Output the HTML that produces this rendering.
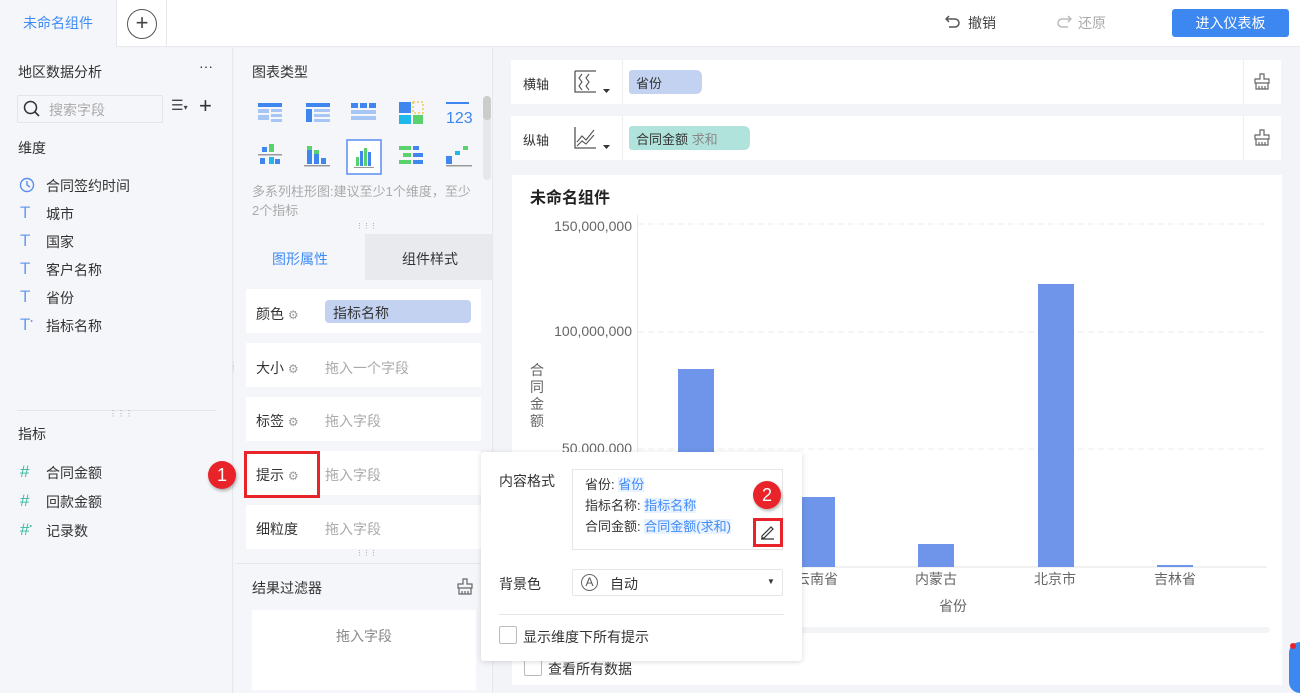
<!DOCTYPE html><html style="overflow:hidden;height:693px"><head><meta charset="utf-8"><style>
*{box-sizing:border-box;margin:0;padding:0}
body{width:1300px;height:693px;overflow:hidden;position:relative;background:#f2f4f7;font-family:"Liberation Sans","Noto Sans CJK SC",sans-serif;font-size:14px;color:#333}
.a{position:absolute}
.t{white-space:nowrap}
</style></head><body>
<!-- top bar -->
<div class="a" style="left:0;top:0;width:1300px;height:47px;background:#fff;border-bottom:1px solid #e8eaee"></div>
<div class="a" style="left:0;top:0;width:117px;height:47px;background:#f5f6f9;border-right:1px solid #e5e7eb"></div>
<div class="a t" style="left:23px;top:13px;color:#3f8cf5;font-size:14px">未命名组件</div>
<div class="a" style="left:166px;top:0;width:1px;height:47px;background:#e5e7eb"></div>
<div class="a" style="left:127px;top:9px;width:30px;height:30px;border:1.5px solid #555;border-radius:50%;text-align:center;line-height:26px;font-size:22px;color:#444">+</div>
<svg class="a" style="left:945px;top:14px" width="16" height="16"><path d="M4 2 L1 5 L4 8 M1 5 H10 A4 4 0 0 1 10 13 H4" fill="none" stroke="#555" stroke-width="1.5"/></svg>
<div class="a t" style="left:968px;top:13px;color:#444">撤销</div>
<svg class="a" style="left:1056px;top:14px" width="16" height="16"><path d="M12 2 L15 5 L12 8 M15 5 H6 A4 4 0 0 0 6 13 H12" fill="none" stroke="#bbb" stroke-width="1.5"/></svg>
<div class="a t" style="left:1078px;top:13px;color:#aaa">还原</div>
<div class="a t" style="left:1172px;top:9px;width:117px;height:28px;background:#3c87f0;border-radius:3px;color:#fff;text-align:center;line-height:28px">进入仪表板</div>

<!-- left panel -->
<div class="a" style="left:0;top:48px;width:233px;height:645px;background:#f5f6f9;border-right:1px solid #e5e7eb"></div>
<div class="a t" style="left:18px;top:62px;font-size:14px;color:#333">地区数据分析</div>
<div class="a t" style="left:199px;top:58px;font-size:14px;color:#333">···</div>
<div class="a" style="left:17px;top:95px;width:146px;height:28px;border:1px solid #e3e5ea;background:#f5f6f9;border-radius:2px"></div>
<svg class="a" style="left:23px;top:100px" width="18" height="18"><circle cx="7.5" cy="7.5" r="6" fill="none" stroke="#333" stroke-width="1.5"/><path d="M12 12 L16 16" stroke="#333" stroke-width="1.6"/></svg>
<div class="a t" style="left:49px;top:100px;color:#aaa">搜索字段</div>
<div class="a t" style="left:171px;top:97px;color:#444;font-size:14px">☰<span style="font-size:8px">▾</span></div>
<div class="a t" style="left:199px;top:93px;color:#333;font-size:22px;font-weight:300">+</div>
<div class="a t" style="left:18px;top:138px">维度</div>
<svg class="a" style="left:19px;top:177px" width="16" height="16"><circle cx="8" cy="8" r="6.5" fill="none" stroke="#5a8ef0" stroke-width="1.4"/><path d="M8 4 V8 L11 10" fill="none" stroke="#5a8ef0" stroke-width="1.4"/></svg>
<div class="a t" style="left:46px;top:176px">合同签约时间</div>
<div class="a t" style="left:20px;top:203px;color:#6b9cf0;font-size:17px">T</div><div class="a t" style="left:46px;top:204px">城市</div>
<div class="a t" style="left:20px;top:231px;color:#6b9cf0;font-size:17px">T</div><div class="a t" style="left:46px;top:232px">国家</div>
<div class="a t" style="left:20px;top:259px;color:#6b9cf0;font-size:17px">T</div><div class="a t" style="left:46px;top:260px">客户名称</div>
<div class="a t" style="left:20px;top:287px;color:#6b9cf0;font-size:17px">T</div><div class="a t" style="left:46px;top:288px">省份</div>
<div class="a t" style="left:20px;top:315px;color:#6b9cf0;font-size:17px">T<sup style="font-size:7px">•</sup></div><div class="a t" style="left:46px;top:316px">指标名称</div>
<div class="a" style="left:17px;top:410px;width:199px;height:1px;background:#e3e5ea"></div>
<div class="a t" style="left:109px;top:409px;font-size:8px;color:#999">⋮⋮⋮</div>
<div class="a t" style="left:18px;top:424px">指标</div>
<div class="a t" style="left:20px;top:462px;color:#3bb8a0;font-size:17px">#</div><div class="a t" style="left:46px;top:463px">合同金额</div>
<div class="a t" style="left:20px;top:491px;color:#3bb8a0;font-size:17px">#</div><div class="a t" style="left:46px;top:492px">回款金额</div>
<div class="a t" style="left:20px;top:520px;color:#3bb8a0;font-size:17px">#<sup style="font-size:7px">•</sup></div><div class="a t" style="left:46px;top:521px">记录数</div>
<div class="a t" style="left:230px;top:364px;font-size:8px;color:#999;line-height:4px">⋮<br>⋮</div>

<!-- middle panel -->
<div class="a" style="left:234px;top:48px;width:259px;height:645px;background:#f5f6f9;border-right:1px solid #e5e7eb"></div>
<div class="a t" style="left:252px;top:62px">图表类型</div>
<div class="a" style="left:483px;top:96px;width:8px;height:84px;background:#e5e7eb;border-radius:4px"></div>
<div class="a" style="left:483px;top:96px;width:8px;height:24px;background:#ccc;border-radius:4px"></div>
<svg class="a" style="left:256px;top:100px" width="230" height="80">
<g fill="#3f86ee"><rect x="2" y="3" width="24" height="4"/></g><g fill="#a7c6f5"><rect x="2" y="9" width="11" height="4"/><rect x="15" y="9" width="11" height="3"/><rect x="2" y="15" width="11" height="5"/><rect x="15" y="14" width="11" height="3"/><rect x="15" y="19" width="11" height="3"/></g>
<g transform="translate(48,0)"><rect x="2" y="3" width="24" height="4" fill="#3f86ee"/><rect x="2" y="9" width="6" height="13" fill="#3f86ee"/><g fill="#a7c6f5"><rect x="10" y="9" width="16" height="3"/><rect x="10" y="14" width="16" height="3"/><rect x="10" y="19" width="16" height="3"/></g></g>
<g transform="translate(95,0)" fill="#3f86ee"><rect x="0" y="3" width="7" height="5"/><rect x="9" y="3" width="7" height="5"/><rect x="18" y="3" width="7" height="5"/><g fill="#a7c6f5"><rect x="0" y="10" width="25" height="4"/><rect x="0" y="16" width="25" height="4"/></g></g>
<g transform="translate(143,0)"><rect x="0" y="2" width="12" height="11" fill="#3f86ee"/><rect x="14" y="2" width="10" height="11" fill="none" stroke="#f5b400" stroke-dasharray="2 2"/><rect x="0" y="15" width="12" height="9" fill="#1fb8ea"/><rect x="14" y="15" width="10" height="9" fill="#59d16d"/></g>
<g transform="translate(190,0)"><rect x="0" y="2" width="23" height="2" fill="#3f86ee"/><text x="0" y="23" font-size="16" fill="#3f86ee" font-family="Liberation Sans">123</text></g>
<g transform="translate(0,44)"><rect x="6" y="3" width="5" height="5" fill="#3f86ee"/><rect x="13" y="0" width="5" height="8" fill="#59d16d"/><rect x="2" y="10" width="24" height="1.5" fill="#999"/><rect x="4" y="14" width="5" height="6" fill="#3f86ee"/><rect x="13" y="13" width="5" height="7" fill="#1fb8ea"/><rect x="19" y="15" width="5" height="5" fill="#3f86ee"/></g>
<g transform="translate(48,44)"><rect x="3" y="6" width="5" height="14" fill="#3f86ee"/><rect x="3" y="2" width="5" height="4" fill="#59d16d"/><rect x="10" y="10" width="5" height="10" fill="#3f86ee"/><rect x="10" y="6" width="5" height="4" fill="#59d16d"/><rect x="17" y="14" width="5" height="6" fill="#3f86ee"/><rect x="0" y="21" width="26" height="1.5" fill="#999"/></g>
<g transform="translate(91,40)"><rect x="0" y="0" width="34" height="34" fill="#fff" stroke="#5a8ef0" stroke-width="1.5"/><rect x="9" y="17" width="3" height="9" fill="#59d16d"/><rect x="13" y="11" width="3" height="15" fill="#3f86ee"/><rect x="17" y="8" width="3" height="18" fill="#59d16d"/><rect x="21" y="12" width="3" height="14" fill="#3f86ee"/><rect x="7" y="27" width="20" height="1" fill="#999"/></g>
<g transform="translate(143,44)"><rect x="0" y="2" width="12" height="4" fill="#59d16d"/><rect x="14" y="2" width="6" height="4" fill="#3f86ee"/><rect x="4" y="9" width="8" height="4" fill="#59d16d"/><rect x="14" y="9" width="10" height="4" fill="#3f86ee"/><rect x="0" y="16" width="12" height="4" fill="#59d16d"/><rect x="14" y="16" width="10" height="4" fill="#3f86ee"/></g>
<g transform="translate(190,44)"><rect x="0" y="12" width="6" height="8" fill="#3f86ee"/><rect x="9" y="7" width="5" height="4" fill="#1fb8ea"/><rect x="17" y="2" width="5" height="4" fill="#59d16d"/><rect x="0" y="21" width="26" height="1.5" fill="#999"/></g>
</svg>
<div class="a" style="left:252px;top:182px;width:225px;font-size:13px;color:#aaa;line-height:19px">多系列柱形图:建议至少1个维度，至少2个指标</div>
<div class="a t" style="left:356px;top:222px;font-size:7px;color:#999">⋮⋮⋮</div>
<div class="a" style="left:235px;top:234px;width:130px;height:46px;background:#f5f6f9"></div>
<div class="a" style="left:365px;top:234px;width:127px;height:46px;background:#e8eaee"></div>
<div class="a t" style="left:272px;top:249px;color:#3f8cf5">图形属性</div>
<div class="a t" style="left:402px;top:249px;color:#333">组件样式</div>
<div class="a" style="left:246px;top:289px;width:235px;height:44px;background:#fff"></div>
<div class="a" style="left:246px;top:343px;width:235px;height:44px;background:#fff"></div>
<div class="a" style="left:246px;top:397px;width:235px;height:44px;background:#fff"></div>
<div class="a" style="left:246px;top:451px;width:235px;height:44px;background:#fff"></div>
<div class="a" style="left:246px;top:505px;width:235px;height:44px;background:#fff"></div>
<div class="a t" style="left:256px;top:304px">颜色 <span style="color:#999;font-size:12px">⚙</span></div>
<div class="a t" style="left:325px;top:300px;width:146px;height:23px;background:#c2d2f0;border-radius:4px;padding:3px 8px">指标名称</div>
<div class="a t" style="left:256px;top:358px">大小 <span style="color:#999;font-size:12px">⚙</span></div><div class="a t" style="left:325px;top:358px;color:#aaa">拖入一个字段</div>
<div class="a t" style="left:256px;top:411px">标签 <span style="color:#999;font-size:12px">⚙</span></div><div class="a t" style="left:325px;top:411px;color:#aaa">拖入字段</div>
<div class="a t" style="left:256px;top:465px">提示 <span style="color:#999;font-size:12px">⚙</span></div><div class="a t" style="left:325px;top:465px;color:#aaa">拖入字段</div>
<div class="a" style="left:244px;top:451px;width:76px;height:47px;border:3px solid #e8232a"></div>
<div class="a" style="left:208px;top:461px;width:28px;height:28px;border-radius:50%;background:#e8232a;color:#fff;text-align:center;line-height:28px;font-size:18px;box-shadow:1px 2px 3px rgba(0,0,0,.3)">1</div>
<div class="a t" style="left:256px;top:519px">细粒度</div><div class="a t" style="left:325px;top:519px;color:#aaa">拖入字段</div>
<div class="a t" style="left:356px;top:549px;font-size:7px;color:#999">⋮⋮⋮</div>
<div class="a" style="left:235px;top:563px;width:257px;height:1px;background:#e5e7eb"></div>
<div class="a t" style="left:252px;top:578px">结果过滤器</div>
<svg class="a" style="left:457px;top:578px" width="16" height="17"><path d="M6 1h4v5h5v4H1V6h5z M2 10v6h12v-6 M5 13v3 M8 13v3 M11 13v3" fill="none" stroke="#666" stroke-width="1.2"/></svg>
<div class="a" style="left:252px;top:610px;width:224px;height:80px;background:#fff"></div>
<div class="a t" style="left:336px;top:626px;color:#888">拖入字段</div>

<!-- right: axes -->
<div class="a" style="left:511px;top:60px;width:770px;height:44px;background:#fff"></div>
<div class="a" style="left:511px;top:116px;width:770px;height:44px;background:#fff"></div>
<div class="a" style="left:622px;top:60px;width:1px;height:44px;background:#eee"></div>
<div class="a" style="left:622px;top:116px;width:1px;height:44px;background:#eee"></div>
<div class="a" style="left:1243px;top:60px;width:1px;height:44px;background:#eee"></div>
<div class="a" style="left:1243px;top:116px;width:1px;height:44px;background:#eee"></div>
<div class="a t" style="left:523px;top:74px;font-size:13px">横轴</div>
<div class="a t" style="left:523px;top:130px;font-size:13px">纵轴</div>
<svg class="a" style="left:574px;top:70px" width="40" height="26"><path d="M1 1V22H22 M1 1H22" fill="none" stroke="#555" stroke-width="1.3"/><path d="M8 4l-3 4 3 4-3 4 3 4 M15 4l-3 4 3 4-3 4 3 4" fill="none" stroke="#555" stroke-width="1.1"/><path d="M29 19h7l-3.5 4z" fill="#333"/></svg>
<svg class="a" style="left:574px;top:126px" width="40" height="26"><path d="M1 1V22H22" fill="none" stroke="#555" stroke-width="1.3"/><path d="M3 16l5-6 4 4 8-10 M3 20l5-5 4 3 8-9" fill="none" stroke="#555" stroke-width="1.1"/><path d="M29 19h7l-3.5 4z" fill="#333"/></svg>
<div class="a t" style="left:629px;top:70px;width:73px;height:24px;background:#c2d2f0;border-radius:3px 6px 6px 3px;padding:3px 7px;font-size:13px">省份</div>
<div class="a t" style="left:629px;top:126px;width:121px;height:24px;background:#b0e3dc;border-radius:3px 6px 6px 3px;padding:3px 7px;font-size:13px">合同金额 <span style="color:#888">求和</span></div>
<svg class="a" style="left:1254px;top:73px" width="16" height="17"><path d="M6 1h4v5h5v4H1V6h5z M2 10v6h12v-6 M5 13v3 M8 13v3 M11 13v3" fill="none" stroke="#666" stroke-width="1.2"/></svg>
<svg class="a" style="left:1254px;top:129px" width="16" height="17"><path d="M6 1h4v5h5v4H1V6h5z M2 10v6h12v-6 M5 13v3 M8 13v3 M11 13v3" fill="none" stroke="#666" stroke-width="1.2"/></svg>

<!-- chart card -->
<div class="a" style="left:512px;top:175px;width:770px;height:510px;background:#fff"></div>
<div class="a t" style="left:530px;top:184px;font-size:16px;font-weight:bold;color:#222">未命名组件</div>
<svg class="a" style="left:512px;top:175px" width="770" height="510">
<g stroke="#eee" stroke-dasharray="6 4"><line x1="126" y1="49" x2="755" y2="49"/><line x1="126" y1="157" x2="755" y2="157"/><line x1="126" y1="274" x2="755" y2="274"/></g>
<line x1="125.5" y1="40" x2="125.5" y2="392" stroke="#e8e8e8"/>
<line x1="126" y1="392" x2="755" y2="392" stroke="#e3e3e3"/>
<g fill="#6e95ea"><rect x="166" y="194" width="36" height="198"/><rect x="288" y="322" width="35" height="70"/><rect x="406" y="369" width="36" height="23"/><rect x="526" y="109" width="36" height="283"/><rect x="645" y="390" width="36" height="2"/></g>
<g font-family="Liberation Sans,Noto Sans CJK SC,sans-serif" font-size="14" fill="#666" text-anchor="end"><text x="120" y="56">150,000,000</text><text x="120" y="161">100,000,000</text><text x="120" y="278">50,000,000</text></g>
<g font-family="Liberation Sans,Noto Sans CJK SC,sans-serif" font-size="14" fill="#666" text-anchor="middle"><text x="305" y="409">云南省</text><text x="424" y="409">内蒙古</text><text x="543" y="409">北京市</text><text x="663" y="409">吉林省</text><text x="441" y="436">省份</text></g>
<g font-family="Liberation Sans,Noto Sans CJK SC,sans-serif" font-size="14" fill="#666"><text x="18" y="200">合</text><text x="18" y="217">同</text><text x="18" y="234">金</text><text x="18" y="251">额</text></g>
<rect x="8" y="452" width="750" height="6" rx="3" fill="#f3f4f6"/>
</svg>
<div class="a" style="left:524px;top:658px;width:18px;height:18px;border:1px solid #bbb;border-radius:2px;background:#fff"></div>
<div class="a t" style="left:548px;top:659px">查看所有数据</div>
<div class="a" style="left:1289px;top:642px;width:11px;height:51px;border-radius:30px 0 0 30px;background:#3c87f0"></div>
<div class="a" style="left:1290px;top:643px;width:6px;height:6px;border-radius:50%;background:#e8232a"></div>

<!-- popup -->
<div class="a" style="left:481px;top:452px;width:321px;height:209px;background:#fff;border-radius:3px;box-shadow:0 1px 6px rgba(0,0,0,.15)"></div>
<div class="a t" style="left:499px;top:471px;font-size:14px">内容格式</div>
<div class="a" style="left:572px;top:469px;width:211px;height:81px;border:1px solid #e6e6e6"></div>
<div class="a t" style="left:585px;top:474px;font-size:13px;line-height:21px">省份: <span style="background:#eaf2fe;color:#3f8cf5">省份</span><br>指标名称: <span style="background:#eaf2fe;color:#3f8cf5">指标名称</span><br>合同金额: <span style="background:#eaf2fe;color:#3f8cf5">合同金额(求和)</span></div>
<div class="a" style="left:753px;top:518px;width:30px;height:29px;border:3px solid #e8232a;background:#fff"></div>
<svg class="a" style="left:759px;top:523px" width="18" height="18"><path d="M3 13l9-9 2 2-9 9H3z M2 16h13" fill="none" stroke="#333" stroke-width="1.2"/></svg>
<div class="a" style="left:753px;top:481px;width:28px;height:28px;border-radius:50%;background:#e8232a;color:#fff;text-align:center;line-height:28px;font-size:18px;box-shadow:1px 2px 3px rgba(0,0,0,.3)">2</div>
<div class="a t" style="left:499px;top:574px">背景色</div>
<div class="a" style="left:572px;top:569px;width:211px;height:27px;border:1px solid #e6e6e6;border-radius:2px"></div>
<div class="a" style="left:581px;top:574px;width:17px;height:17px;border:1.3px solid #666;border-radius:50%;text-align:center;font-size:12px;line-height:15px;color:#555">A</div>
<div class="a t" style="left:610px;top:574px">自动</div>
<div class="a t" style="left:767px;top:577px;font-size:8px;color:#333">▼</div>
<div class="a" style="left:499px;top:614px;width:285px;height:1px;background:#e6e6e6"></div>
<div class="a" style="left:499px;top:626px;width:18px;height:18px;border:1px solid #bbb;border-radius:2px"></div>
<div class="a t" style="left:523px;top:627px">显示维度下所有提示</div>
</body></html>
